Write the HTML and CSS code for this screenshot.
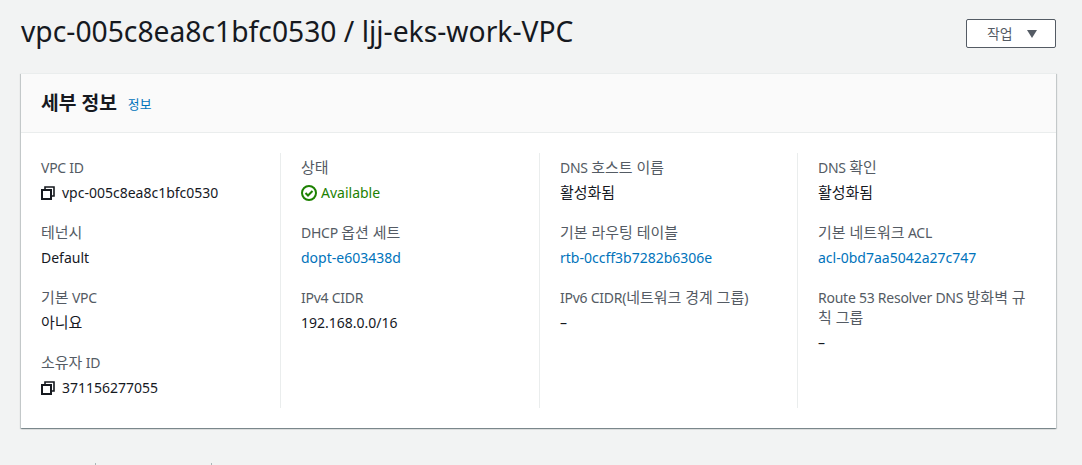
FILE: index.html
```html
<!DOCTYPE html>
<html>
<head>
  <meta charset="UTF-8">
  <title>VPC</title>
  <link rel="stylesheet" href="styles.css">
</head>
<body>
  <div class="page-head">
    <h1>vpc-005c8ea8c1bfc0530 / ljj-eks-work-VPC</h1>
    <button class="action-btn" type="button"><span class="ko">작업</span><span class="caret"></span></button>
  </div>

  <div class="card">
    <div class="card-head">
      <h2><span class="ko">세부 정보</span></h2>
      <a class="info" href="#"><span class="ko">정보</span></a>
    </div>
    <div class="card-body">
      <div class="col">
        <div class="field">
          <div class="label">VPC ID</div>
          <div class="value copy">
            <svg class="copy-icon" viewBox="0 0 14 14"><path d="M4 3V1h9v9h-2" fill="none" stroke="#16191f" stroke-width="1.6"/><path d="M1 4h9v9H1z" fill="none" stroke="#16191f" stroke-width="2"/></svg>
            vpc-005c8ea8c1bfc0530
          </div>
        </div>
        <div class="field">
          <div class="label"><span class="ko">테넌시</span></div>
          <div class="value">Default</div>
        </div>
        <div class="field">
          <div class="label"><span class="ko">기본</span> VPC</div>
          <div class="value"><span class="ko">아니요</span></div>
        </div>
        <div class="field">
          <div class="label"><span class="ko">소유자</span> ID</div>
          <div class="value copy">
            <svg class="copy-icon" viewBox="0 0 14 14"><path d="M4 3V1h9v9h-2" fill="none" stroke="#16191f" stroke-width="1.6"/><path d="M1 4h9v9H1z" fill="none" stroke="#16191f" stroke-width="2"/></svg>
            371156277055
          </div>
        </div>
      </div>

      <div class="col">
        <div class="field">
          <div class="label"><span class="ko">상태</span></div>
          <div class="value status">
            <svg class="status-icon" viewBox="0 0 16 16"><circle cx="8" cy="8" r="7" fill="none" stroke="#1d8102" stroke-width="2"/><path d="M4.5 8l2.5 2.5 4.5-4.5" fill="none" stroke="#1d8102" stroke-width="2"/></svg>
            Available
          </div>
        </div>
        <div class="field">
          <div class="label">DHCP <span class="ko">옵션 세트</span></div>
          <div class="value"><a href="#">dopt-e603438d</a></div>
        </div>
        <div class="field">
          <div class="label">IPv4 CIDR</div>
          <div class="value">192.168.0.0/16</div>
        </div>
      </div>

      <div class="col">
        <div class="field">
          <div class="label">DNS <span class="ko">호스트 이름</span></div>
          <div class="value"><span class="ko">활성화됨</span></div>
        </div>
        <div class="field">
          <div class="label"><span class="ko">기본 라우팅 테이블</span></div>
          <div class="value"><a href="#">rtb-0ccff3b7282b6306e</a></div>
        </div>
        <div class="field">
          <div class="label">IPv6 CIDR(<span class="ko">네트워크 경계 그룹</span>)</div>
          <div class="value">–</div>
        </div>
      </div>

      <div class="col">
        <div class="field">
          <div class="label">DNS <span class="ko">확인</span></div>
          <div class="value"><span class="ko">활성화됨</span></div>
        </div>
        <div class="field">
          <div class="label"><span class="ko">기본 네트워크</span> ACL</div>
          <div class="value"><a href="#">acl-0bd7aa5042a27c747</a></div>
        </div>
        <div class="field">
          <div class="label">Route 53 Resolver DNS <span class="ko">방화벽 규칙 그룹</span></div>
          <div class="value">–</div>
        </div>
      </div>
    </div>
  </div>

  <div class="tabs">
    <span class="tab tab-first"></span>
    <span class="tab tab-second"></span>
  </div>
</body>
</html>
```

FILE: styles.css
```css
html, body {
  height: 100%;
}

body {
  margin: 0;
  padding: 0 26px 0 21px;
  box-sizing: border-box;
  overflow: hidden;
  background: #f2f3f3;
  color: #16191f;
  font-family: "Noto Sans", "Noto Sans CJK KR", sans-serif;
  font-size: 14px;
}

a {
  color: #0073bb;
  text-decoration: none;
}

/* hangul runs a little wider in the original */
.ko {
  font-size: 1.07em;
  line-height: 1;
  letter-spacing: 0;
}

.page-head {
  display: flex;
  justify-content: space-between;
  align-items: flex-start;
  height: 73px;
  padding-top: 19px;
  box-sizing: border-box;
}

h1 {
  margin: -6px 0 0;
  font-size: 28.25px;
  line-height: 36px;
  font-weight: 400;
}

.action-btn {
  display: flex;
  align-items: center;
  gap: 14px;
  width: 90px;
  height: 29px;
  padding: 0 0 0 20px;
  background: #fff;
  border: 1px solid #545b64;
  border-radius: 2px;
  color: #545b64;
  font-family: inherit;
  font-size: 13px;
}

.caret {
  width: 0;
  height: 0;
  border-left: 5.5px solid transparent;
  border-right: 5.5px solid transparent;
  border-top: 8px solid #545b64;
}

.card {
  background: #fff;
  border-top: 1px solid #eaeded;
  box-shadow: 0 1px 1px 0 rgba(0,28,36,0.3), 1px 1px 1px 0 rgba(0,28,36,0.15), -1px 1px 1px 0 rgba(0,28,36,0.15);
}

.card-head {
  display: flex;
  align-items: center;
  gap: 11px;
  height: 58px;
  padding-left: 20px;
  background: #fafafa;
  border-bottom: 1px solid #eaeded;
}

h2 {
  margin: 0;
  font-size: 18px;
  line-height: 22px;
  font-weight: 700;
}

.info {
  font-size: 12px;
  padding-top: 3px;
}

.card-body {
  display: grid;
  grid-template-columns: 240px 259px 258px 1fr;
  padding: 20px 16px 20px 20px;
}

.col {
  display: flex;
  flex-direction: column;
  gap: 19px;
  padding: 5px 20px 9px 20px;
  border-right: 1px solid #eaeded;
}

.col:first-child {
  padding-left: 0;
}

.col:last-child {
  padding-right: 6px;
  border-right: none;
}

.label {
  color: #545b64;
  line-height: 20px;
  letter-spacing: -0.25px;
}

.value {
  margin-top: 4px;
  line-height: 22px;
}

.copy, .status {
  display: flex;
  align-items: center;
}

.copy-icon {
  width: 14px;
  height: 14px;
  margin-right: 7px;
}

.status {
  color: #1d8102;
}

.status-icon {
  width: 16px;
  height: 16px;
  margin-right: 4px;
}

.tabs {
  display: flex;
  height: 3px;
  margin-top: 35px;
}

.tab {
  width: 1px;
  height: 3px;
  background: #aab7b8;
}

.tab-first {
  margin-left: 74px;
}

.tab-second {
  margin-left: 115px;
}
```
